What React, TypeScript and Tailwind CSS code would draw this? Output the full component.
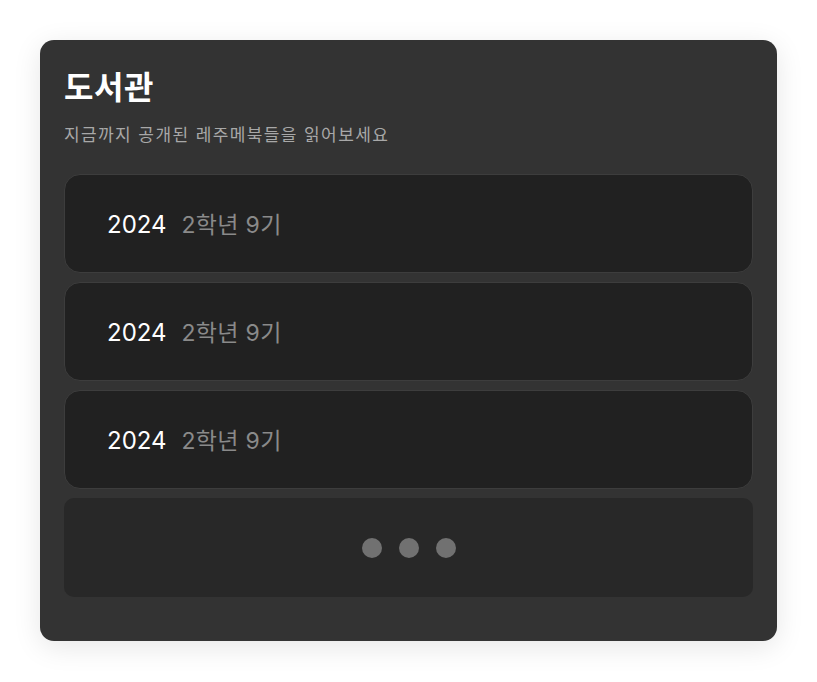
export default function App() {
  const items = [
    { year: "2024", label: "2학년 9기" },
    { year: "2024", label: "2학년 9기" },
    { year: "2024", label: "2학년 9기" },
  ]

  return (
    <div
      className="min-h-screen bg-white p-10"
      style={{ fontFamily: 'Inter, "Noto Sans CJK KR", sans-serif' }}
    >
      <div className="w-[737px] h-[601px] rounded-[14px] bg-[#333333] px-6 pt-6 shadow-[0_6px_28px_rgba(0,0,0,0.1)]">
        <h1 className="text-[32px] leading-[48px] font-bold text-white tracking-[0.5px]">도서관</h1>
        <p className="mt-[11px] text-[17px] leading-6 text-[#a8a8a8] tracking-[1.4px]">지금까지 공개된 레주메북들을 읽어보세요</p>

        <div className="mt-[27px] flex flex-col gap-[9px]">
          {items.map((item, i) => (
            <div
              key={i}
              className="h-[99px] rounded-[16px] border border-[#3d3d3d] bg-[#212121] pl-[42px] pt-[3px] flex items-center gap-[15px]"
            >
              <span className="text-[24px] font-normal text-white">{item.year}</span>
              <span className="text-[23px] text-[#8a8a8a] tracking-[0.3px]">{item.label}</span>
            </div>
          ))}

          <div className="h-[99px] rounded-[10px] bg-[#282828] flex items-center justify-center gap-[17px]">
            <span className="w-5 h-5 rounded-full bg-[#717171]" />
            <span className="w-5 h-5 rounded-full bg-[#717171]" />
            <span className="w-5 h-5 rounded-full bg-[#717171]" />
          </div>
        </div>
      </div>
    </div>
  )
}
